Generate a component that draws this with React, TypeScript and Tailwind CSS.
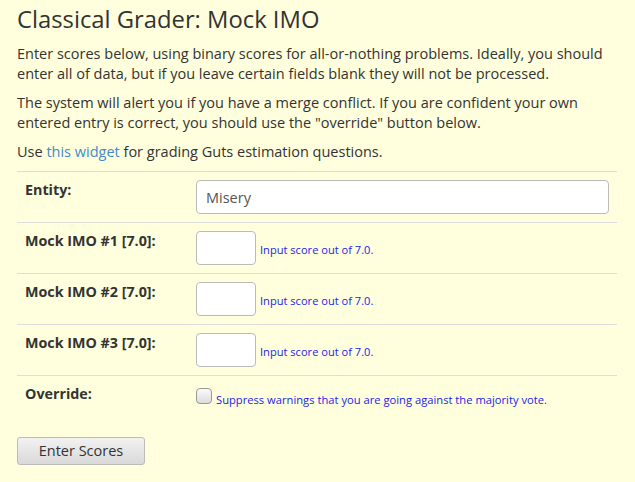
const font = { fontFamily: '"Open Sans", "Liberation Sans", sans-serif' };

function ScoreRow({ label }: { label: string }) {
  return (
    <div className="flex border-t border-[#dddddd] h-[51px]">
      <div className="w-[179px] pl-2 pt-2 text-[14.3px] leading-5 font-bold text-[#333333]">{label}</div>
      <div className="flex items-start pt-2">
        <input className="w-[60px] h-[34px] rounded border border-[#bbbbbb] bg-white" />
        <span className="ml-1 mt-[11px] text-[11.1px] leading-[15px] text-[#2323e8]">Input score out of 7.0.</span>
      </div>
    </div>
  );
}

export default function App() {
  return (
    <div className="min-h-[482px] w-[635px] bg-[#ffffdd] px-[17px] pt-[3px]" style={font}>
      <h1 className="text-[23.8px] leading-[32px] text-[#333333]">Classical Grader: Mock IMO</h1>
      <p className="mt-[9px] text-[14.5px] leading-5 text-[#333333]">
        Enter scores below, using binary scores for all-or-nothing problems. Ideally, you should enter all of data, but if you leave certain fields blank they will not be processed.
      </p>
      <p className="mt-[9px] text-[14.5px] leading-5 text-[#333333]">
        The system will alert you if you have a merge conflict. If you are confident your own entered entry is correct, you should use the "override" button below.
      </p>
      <p className="mt-[9px] text-[14.5px] leading-5 text-[#333333]">
        Use <a className="text-[#428bca]">this widget</a> for grading Guts estimation questions.
      </p>
      <div className="mt-[9px] w-[600px]">
        <div className="flex border-t border-[#dddddd] h-[51px]">
          <div className="w-[179px] pl-2 pt-2 text-[14.3px] leading-5 font-bold text-[#333333]">Entity:</div>
          <div className="pt-2">
            <input
              defaultValue="Misery"
              className="w-[413px] h-[34px] rounded border border-[#bbbbbb] bg-white px-[9px] text-[14.5px] text-[#555555]"
              style={font}
            />
          </div>
        </div>
        <ScoreRow label="Mock IMO #1 [7.0]:" />
        <ScoreRow label="Mock IMO #2 [7.0]:" />
        <ScoreRow label="Mock IMO #3 [7.0]:" />
        <div className="flex border-t border-[#dddddd] h-[50px]">
          <div className="w-[179px] pl-2 pt-2 text-[14.3px] leading-5 font-bold text-[#333333]">Override:</div>
          <div className="flex items-start pt-[12px]">
            <span className="w-4 h-4 rounded-[4px] border border-[#999999] bg-gradient-to-b from-[#fafafa] to-[#dddddd]" />
            <span className="ml-1 mt-[4px] text-[11.2px] leading-[15px] text-[#2323e8]">Suppress warnings that you are going against the majority vote.</span>
          </div>
        </div>
      </div>
      <button className="mt-[12px] w-[128px] h-[28px] rounded-[3px] border border-[#bbbbbb] bg-gradient-to-b from-[#f2f2f2] to-[#d9d9d9] text-[14.5px] text-[#333333]" style={font}>
        Enter Scores
      </button>
    </div>
  );
}
